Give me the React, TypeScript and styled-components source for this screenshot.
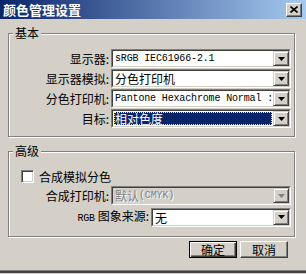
import React from 'react';
import styled, { createGlobalStyle } from 'styled-components';

const GlobalStyle = createGlobalStyle`
  html, body {
    margin: 0;
    padding: 0;
    background: #d4d0c8;
  }
  body {
    font-family: "Noto Sans CJK SC", "DejaVu Sans", sans-serif;
    font-size: 12px;
    color: #000;
  }
`;

const Window = styled.div`
  width: 306px;
  height: 273px;
  box-sizing: border-box;
  background: #d4d0c8;
  border-bottom: 2px solid #404040;
  box-shadow: inset 0 -1px 0 #808080;
  display: flex;
  flex-direction: column;
`;

const TitleBar = styled.div`
  height: 19px;
  display: flex;
  align-items: center;
  justify-content: space-between;
  padding: 0 4px 0 3px;
  background: linear-gradient(to right, #0a246a, #a6caf0);
`;

const Title = styled.span`
  color: #fff;
  font-weight: bold;
  font-size: 13px;
  line-height: 19px;
`;

const CloseButton = styled.div`
  width: 16px;
  height: 14px;
  box-sizing: border-box;
  background: #d4d0c8;
  border: 1px solid;
  border-color: #fff #404040 #404040 #fff;
  box-shadow: inset -1px -1px 0 #808080;
  display: flex;
  align-items: center;
  justify-content: center;
`;

const Body = styled.div`
  flex: 1;
  padding: 7px 11px 0 8px;
  display: flex;
  flex-direction: column;
`;

const Group = styled.fieldset<{ $pad: string }>`
  margin: 0;
  padding: ${p => p.$pad};
  border: 1px solid #808080;
  box-shadow: inset 1px 1px 0 #fff, 1px 1px 0 #fff;
  min-width: 0;
  & + & {
    margin-top: 7px;
  }
`;

const Legend = styled.legend`
  margin-left: 4px;
  padding: 0 2px;
  line-height: 14px;
  background: #d4d0c8;
`;

const Rows = styled.div`
  display: flex;
  flex-direction: column;
  gap: 1px;
`;

const Row = styled.div`
  display: flex;
  align-items: center;
  justify-content: flex-end;
  gap: 2px;
`;

const Label = styled.span`
  white-space: nowrap;
  line-height: 19px;
`;

const Mono = styled.span`
  font-family: "Liberation Mono", monospace;
  font-size: 10px;
  letter-spacing: -0.15px;
`;

const Field = styled.div<{ $width: number; $disabled?: boolean }>`
  width: ${p => p.$width}px;
  height: 19px;
  box-sizing: border-box;
  display: flex;
  border: 1px solid;
  border-color: #808080 #fff #fff #808080;
  background: ${p => (p.$disabled ? '#d4d0c8' : '#fff')};
`;

const FieldInner = styled.div`
  flex: 1;
  display: flex;
  min-width: 0;
  border: 1px solid;
  border-color: #404040 #d4d0c8 #d4d0c8 #404040;
`;

const Value = styled.div<{ $selected?: boolean; $disabled?: boolean }>`
  flex: 1;
  min-width: 0;
  overflow: hidden;
  white-space: nowrap;
  line-height: 15px;
  padding-left: 2px;
  display: flex;
  align-items: center;
  background: ${p => (p.$selected ? '#0a246a' : 'transparent')};
  box-shadow: ${p => (p.$selected ? 'inset 0 0 0 1px #fff' : 'none')};
  color: ${p => (p.$selected ? '#fff' : p.$disabled ? '#808080' : '#000')};
  outline: ${p => (p.$selected ? '1px dotted #f0e68c' : 'none')};
  outline-offset: -2px;
  text-shadow: ${p => (p.$disabled ? '1px 1px 0 #fff' : 'none')};
`;

const DropButton = styled.div`
  width: 16px;
  flex-shrink: 0;
  box-sizing: border-box;
  background: #d4d0c8;
  border: 1px solid;
  border-color: #d4d0c8 #404040 #404040 #d4d0c8;
  box-shadow: inset 1px 1px 0 #fff, inset -1px -1px 0 #808080;
  display: flex;
  align-items: center;
  justify-content: center;
`;

const CheckRow = styled.div`
  display: flex;
  align-items: center;
  gap: 5px;
  padding-left: 12px;
  height: 14px;
  margin-bottom: 3px;
`;

const CheckBox = styled.div`
  width: 13px;
  height: 13px;
  box-sizing: border-box;
  background: #fff;
  border: 1px solid;
  border-color: #808080 #fff #fff #808080;
  box-shadow: inset 1px 1px 0 #404040, inset -1px -1px 0 #d4d0c8;
`;

const Buttons = styled.div`
  display: flex;
  justify-content: flex-end;
  gap: 3px;
  margin-top: 4px;
  padding-right: 7px;
`;

const Button = styled.div<{ $default?: boolean }>`
  width: 48px;
  height: 17px;
  box-sizing: border-box;
  display: flex;
  align-items: center;
  justify-content: center;
  background: #d4d0c8;
  border: 1px solid;
  border-color: ${p =>
    p.$default ? '#000' : '#fff #404040 #404040 #fff'};
  box-shadow: ${p =>
    p.$default
      ? 'inset 1px 1px 0 #fff, inset -1px -1px 0 #404040, inset -2px -2px 0 #808080'
      : 'inset -1px -1px 0 #808080'};
  line-height: 14px;
`;

const Arrow: React.FC<{ disabled?: boolean }> = ({ disabled }) => (
  <svg width="7" height="4" viewBox="0 0 7 4">
    <path d="M0 0h7L3.5 4z" fill={disabled ? '#808080' : '#000'} />
  </svg>
);

const Select: React.FC<{
  width: number;
  selected?: boolean;
  disabled?: boolean;
  children: React.ReactNode;
}> = ({ width, selected, disabled, children }) => (
  <Field $width={width} $disabled={disabled}>
    <FieldInner>
      <Value $selected={selected} $disabled={disabled}>{children}</Value>
      <DropButton>
        <Arrow disabled={disabled} />
      </DropButton>
    </FieldInner>
  </Field>
);

const App: React.FC = () => {
  return (
    <>
      <GlobalStyle />
      <Window>
        <TitleBar>
          <Title>颜色管理设置</Title>
          <CloseButton>
            <svg width="8" height="7" viewBox="0 0 8 7">
              <path d="M0.5 0.5l7 6M7.5 0.5l-7 6" stroke="#000" strokeWidth="1.6" />
            </svg>
          </CloseButton>
        </TitleBar>
        <Body>
          <Group $pad="9px 3px 8px 0">
            <Legend>基本</Legend>
            <Rows>
              <Row>
                <Label>显示器:</Label>
                <Select width={180}>
                  <Mono>sRGB IEC61966-2.1</Mono>
                </Select>
              </Row>
              <Row>
                <Label>显示器模拟:</Label>
                <Select width={180}>分色打印机</Select>
              </Row>
              <Row>
                <Label>分色打印机:</Label>
                <Select width={180}>
                  <Mono>Pantone Hexachrome Normal :</Mono>
                </Select>
              </Row>
              <Row>
                <Label>目标:</Label>
                <Select width={180} selected>
                  相对色度
                </Select>
              </Row>
            </Rows>
          </Group>
          <Group $pad="11px 3px 8px 0">
            <Legend>高级</Legend>
            <CheckRow>
              <CheckBox />
              <span>合成模拟分色</span>
            </CheckRow>
            <Rows>
              <Row>
                <Label>合成打印机:</Label>
                <Select width={180} disabled>
                  默认<Mono>(CMYK)</Mono>
                </Select>
              </Row>
              <Row>
                <Label>
                  <Mono>RGB</Mono> 图象来源:
                </Label>
                <Select width={140}>无</Select>
              </Row>
            </Rows>
          </Group>
          <Buttons>
            <Button $default>确定</Button>
            <Button>取消</Button>
          </Buttons>
        </Body>
      </Window>
    </>
  );
};

export default App;
